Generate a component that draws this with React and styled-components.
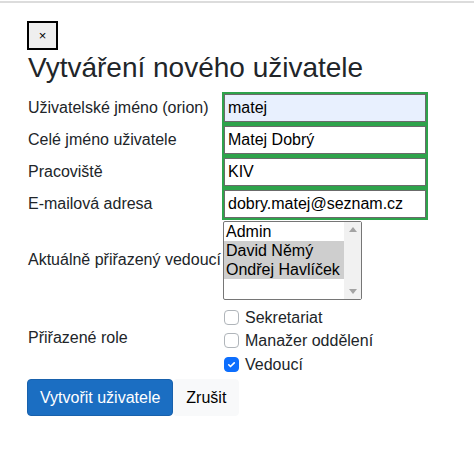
import React from "react";
import styled, { createGlobalStyle } from "styled-components";

const GlobalStyle = createGlobalStyle`
  body {
    margin: 0;
    background: #fff;
    font-family: "Liberation Sans", Arial, sans-serif;
    color: #212529;
  }
`;

const Page = styled.div`
  border-top: 2px solid #dcdcdc;
  margin-top: 1px;
  padding: 18px 27px 30px;
`;

const CloseButton = styled.button`
  display: flex;
  align-items: center;
  justify-content: center;
  width: 31px;
  height: 29px;
  padding: 0;
  background: #efefef;
  border: 2px solid #000;
  font-family: "Liberation Sans", Arial, sans-serif;
  font-size: 13px;
  color: #000;
`;

const Title = styled.h3`
  margin: 1px 0 7px 1px;
  font-size: 28px;
  font-weight: 400;
  line-height: 1.2;
  color: #212529;
`;

const Form = styled.div`
  display: grid;
  grid-template-columns: max-content max-content;
  column-gap: 1px;
  align-items: center;
  margin-left: 1px;
`;

const Label = styled.div`
  font-size: 16px;
  line-height: 1.5;
`;

const Input = styled.input`
  box-sizing: border-box;
  width: 206px;
  height: 32px;
  margin: 0;
  padding: 0 4px;
  border: 2px solid #2ea34b;
  box-shadow: inset 0 0 0 1px #6b6b6b;
  background: ${(p) => (p.$autofill ? "#e8f0fe" : "#fff")};
  font-family: "Liberation Sans", Arial, sans-serif;
  font-size: 16px;
  color: #000;
  outline: none;
`;

const ListBox = styled.div`
  box-sizing: border-box;
  display: flex;
  width: 139px;
  height: 79px;
  margin: 1px 0 0 1px;
  border: 1px solid #767676;
  border-radius: 2px;
  background: #fff;
`;

const Options = styled.div`
  flex: 1;
  display: flex;
  flex-direction: column;
`;

const Option = styled.div`
  padding: 0 2px;
  height: 19px;
  line-height: 19px;
  font-size: 16px;
  color: #000;
  white-space: nowrap;
  background: ${(p) => (p.$selected ? "#cecece" : "transparent")};
`;

const ScrollBar = styled.div`
  width: 17px;
  display: flex;
  flex-direction: column;
  justify-content: space-between;
  align-items: center;
  padding: 5px 0;
  background: #f1f1f1;
`;

const Roles = styled.div`
  display: flex;
  flex-direction: column;
  padding: 6px 0 1px 2px;
`;

const Check = styled.label`
  display: flex;
  align-items: center;
  gap: 6px;
  font-size: 16px;
  line-height: 23.5px;
`;

const Box = styled.span`
  box-sizing: border-box;
  display: inline-flex;
  align-items: center;
  justify-content: center;
  width: 15px;
  height: 15px;
  border-radius: 4px;
  border: 1px solid ${(p) => (p.$checked ? "#0d6efd" : "#b0b5ba")};
  background: ${(p) => (p.$checked ? "#0d6efd" : "#fff")};
`;

const Actions = styled.div`
  display: flex;
  margin-top: 2px;
`;

const Button = styled.button`
  height: 37px;
  padding: 0 12px;
  border-radius: 4px;
  font-family: "Liberation Sans", Arial, sans-serif;
  font-size: 16px;
  border: 1px solid ${(p) => (p.$primary ? "#1861ac" : "#f8f9fa")};
  background: ${(p) => (p.$primary ? "#1b6ec2" : "#f8f9fa")};
  color: ${(p) => (p.$primary ? "#fff" : "#000")};
`;

function Arrow({ down }) {
  return (
    <svg width="8" height="5" viewBox="0 0 8 5">
      <path d={down ? "M0 0h8L4 5z" : "M0 5h8L4 0z"} fill="#a3a3a3" />
    </svg>
  );
}

function CheckBox({ checked, children }) {
  return (
    <Check>
      <Box $checked={checked}>
        {checked && (
          <svg width="11" height="11" viewBox="0 0 20 20">
            <path d="M5 10.5l3.2 3.2L15 7" fill="none" stroke="#fff" strokeWidth="3" strokeLinecap="round" strokeLinejoin="round" />
          </svg>
        )}
      </Box>
      {children}
    </Check>
  );
}

const leaders = [
  { name: "Admin", selected: false },
  { name: "David Němý", selected: true },
  { name: "Ondřej Havlíček", selected: true },
];

export default function App() {
  return (
    <Page>
      <GlobalStyle />
      <CloseButton>×</CloseButton>
      <Title>Vytváření nového uživatele</Title>
      <Form>
        <Label>Uživatelské jméno (orion)</Label>
        <Input $autofill defaultValue="matej" />
        <Label>Celé jméno uživatele</Label>
        <Input defaultValue="Matej Dobrý" />
        <Label>Pracoviště</Label>
        <Input defaultValue="KIV" />
        <Label>E-mailová adresa</Label>
        <Input defaultValue="dobry.matej@seznam.cz" />
        <Label>Aktuálně přiřazený vedoucí</Label>
        <ListBox role="listbox">
          <Options>
            {leaders.map((l) => (
              <Option key={l.name} $selected={l.selected}>{l.name}</Option>
            ))}
          </Options>
          <ScrollBar>
            <Arrow />
            <Arrow down />
          </ScrollBar>
        </ListBox>
        <Label>Přiřazené role</Label>
        <Roles>
          <CheckBox>Sekretariat</CheckBox>
          <CheckBox>Manažer oddělení</CheckBox>
          <CheckBox checked>Vedoucí</CheckBox>
        </Roles>
      </Form>
      <Actions>
        <Button $primary>Vytvořit uživatele</Button>
        <Button>Zrušit</Button>
      </Actions>
    </Page>
  );
}
